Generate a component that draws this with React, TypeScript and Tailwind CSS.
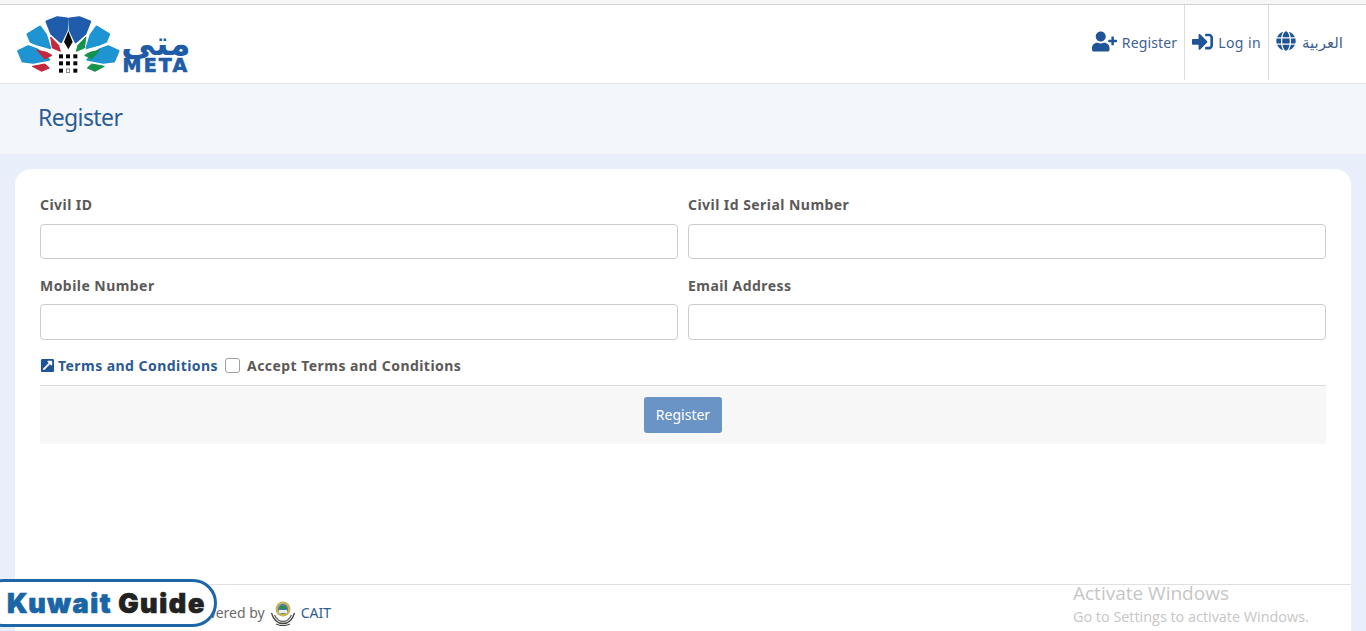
import { FaUserPlus, FaSignInAlt, FaGlobe, FaExternalLinkSquareAlt } from "react-icons/fa";

const noto = "font-['Noto_Sans','DejaVu_Sans',sans-serif]";

const mirror = (pts: number[][]) => pts.map(([x, y]) => `${410 - x},${y}`).join(" ");
const plain = (pts: number[][]) => pts.map(([x, y]) => `${x},${y}`).join(" ");

const dark = [[140, 64], [172, 51], [202, 55], [200, 90], [183, 125], [154, 100]];
const mid = [[83, 102], [120, 79], [138, 104], [150, 143], [112, 132], [92, 124]];
const low = [[55, 152], [85, 138], [112, 148], [147, 178], [100, 187], [68, 183]];
const tints = [
  [[152, 110], [176, 135], [181, 153], [157, 143]],
  [[110, 149], [140, 156], [156, 165], [135, 176]],
  [[97, 198], [135, 191], [148, 203], [125, 213]],
];

function Logo() {
  return (
    <div className="flex items-start pl-[16px]">
      <svg width="105" height="60" viewBox="48 44 315 180" className="mt-[10px] shrink-0">
        {[dark, mid, low].map((p, i) => {
          const c = i === 0 ? "#1f5cab" : "#1f94d2";
          return (
            <g key={i} fill={c} stroke={c} strokeWidth="7" strokeLinejoin="round">
              <polygon points={plain(p)} />
              <polygon points={mirror(p)} />
            </g>
          );
        })}
        {tints.map((p, i) => (
          <g key={i} strokeWidth="3" strokeLinejoin="round">
            <polygon points={plain(p)} fill="#c4283a" stroke="#c4283a" />
            <polygon points={mirror(p)} fill="#17924a" stroke="#17924a" />
          </g>
        ))}
        <polygon points="205,92 218,125 205,147 192,125" fill="#0a0a0a" />
        {[162, 183, 205].map((y) =>
          [177, 198, 220].map((x) =>
            y === 205 && x === 198 ? (
              <rect key={x + y} x={x + 1} y={y + 1} width="10" height="10" fill="#fff" stroke="#555" strokeWidth="2" />
            ) : (
              <rect key={x + y} x={x} y={y} width="12" height="12" fill="#0a0a0a" />
            )
          )
        )}
      </svg>
      <div className="ml-[2px] mt-[23px] flex w-[66px] flex-col items-center text-[#1f5ba6]">
        <span className="font-['DejaVu_Sans',sans-serif] text-[34px] font-bold leading-[30px]">متى</span>
        <span className="font-['DejaVu_Sans',sans-serif] text-[19px] font-bold leading-[15px] tracking-[2.2px] [-webkit-text-stroke:0.7px_#1f5ba6]">
          META
        </span>
      </div>
    </div>
  );
}

function Field({ label, tall }: { label: string; tall?: boolean }) {
  return (
    <div className="flex flex-col">
      <label className="h-[21px] text-[14px] font-bold leading-[21px] tracking-[0.45px] text-[#5c5a58]">{label}</label>
      <input
        type="text"
        className={
          tall
            ? "mt-[8px] h-[36px] w-full rounded-[4px] border border-[#cccccc] bg-white"
            : "mt-[9px] h-[35px] w-full rounded-[4px] border border-[#cccccc] bg-white"
        }
      />
    </div>
  );
}

function Crest() {
  return (
    <svg width="26" height="26" viewBox="0 0 26 26" className="shrink-0">
      <circle cx="13" cy="9" r="7.5" fill="#c9b45a" />
      <circle cx="13" cy="9" r="5" fill="#4f7ba8" />
      <path d="M9 10h8v3H9z" fill="#e8edf0" />
      <path d="M10 6h6v3h-6z" fill="#2f8a50" />
      <path d="M1.5 13c2 7 6 10.500 11.500 10.500s9.500-3.500 11.500-10.500" fill="none" stroke="#444" strokeWidth="1.3" />
      <path d="M4.500 15c2 4.500 5 6.500 8.500 6.500s6.500-2 8.500-6.500" fill="none" stroke="#666" strokeWidth="1.3" />
      <path d="M6 24c4.500 2 9.500 2 14 0" fill="none" stroke="#444" strokeWidth="1.3" />
    </svg>
  );
}

export default function App() {
  return (
    <div className={`relative flex h-[631px] w-full flex-col overflow-hidden bg-[#e9effa] ${noto}`}>
      <div className="h-[5px] border-b border-[#d2d2d2] bg-[#f6f6f6]" />
      <header className="flex h-[79px] items-start justify-between border-b border-[#e6e6e6] bg-white">
        <Logo />
        <nav className="flex h-full items-stretch pb-[3px] text-[14px] tracking-[0.15px] text-[#3f6291]">
          <a className="flex items-center gap-[5px] pr-[7px]">
            <FaUserPlus className="mt-[-3px] text-[25px] text-[#1f5597]" />
            <span>Register</span>
          </a>
          <a className="flex items-center gap-[5px] border-l border-[#dddddd] pl-[7px] pr-[7px] tracking-[0.4px]">
            <FaSignInAlt className="mt-[-3px] text-[21px] text-[#1f5597]" />
            <span>Log in</span>
          </a>
          <a className="flex items-center gap-[6px] border-l border-[#dddddd] pl-[7px] pr-[23px]">
            <FaGlobe className="mt-[-3px] text-[20px] text-[#1f5597]" />
            <span className="text-[15px]">العربية</span>
          </a>
        </nav>
      </header>
      <div className="flex h-[70px] items-center bg-[#f3f6fb] pb-[4px] pl-[38px]">
        <h1 className="text-[23px] font-normal leading-[32px] tracking-[-0.6px] text-[#2a5c96] [font-stretch:semi-condensed]">Register</h1>
      </div>
      <main className="mx-[15px] mt-[15px] flex flex-1 flex-col rounded-t-[16px] bg-white">
        <div className="px-[25px] pt-[25px]">
          <div className="grid grid-cols-2 gap-x-[10px] gap-y-[16px]">
            <Field label="Civil ID" />
            <Field label="Civil Id Serial Number" />
            <Field label="Mobile Number" tall />
            <Field label="Email Address" tall />
          </div>
          <div className="mt-[15px] flex h-[21px] items-center text-[14px] font-bold leading-[21px] tracking-[0.45px]">
            <FaExternalLinkSquareAlt className="text-[15px] text-[#1f5597]" />
            <span className="ml-[3px] text-[#2b5a94]">Terms and Conditions</span>
            <span className="ml-[7px] h-[15px] w-[15px] rounded-[3px] border border-[#a0a0a0] bg-white" />
            <span className="ml-[7px] text-[#5c5a58]">Accept Terms and Conditions</span>
          </div>
          <div className="mt-[9px] flex h-[59px] items-center justify-center border-t border-[#dcdcdc] bg-[#f7f7f7]">
            <button className="h-[36px] w-[78px] rounded-[3px] bg-[#6a93c6] pb-[2px] text-[14px] text-white">Register</button>
          </div>
        </div>
        <footer className="mt-auto flex h-[47px] items-center gap-[5px] border-t border-[#e0e0e0] pl-[173px] pt-[9px] text-[14px] text-[#6b6b6b]">
          <span>Powered by</span>
          <Crest />
          <span className="text-[#2f5c8f]">CAIT</span>
        </footer>
      </main>
      <div className="absolute left-[-20px] top-[579px] flex h-[48px] w-[237px] items-center rounded-l-[26px] rounded-r-[26px] border-[3px] border-[#1f66a8] bg-white pl-[24px] pt-[1px] font-['Inter',sans-serif] text-[27px] font-black leading-none tracking-[1.6px] [-webkit-text-stroke:0.7px_currentColor]">
        <span className="text-[#1a65a6]">Kuwait</span>
        <span className="ml-[6px] text-[#222222]">Guide</span>
      </div>
      <div className="pointer-events-none absolute left-[1073px] top-[582px] font-['Open_Sans',sans-serif] text-[#c6c6c6]">
        <div className="text-[19px] leading-[23px]">Activate Windows</div>
        <div className="text-[14.4px] leading-[23px]">Go to Settings to activate Windows.</div>
      </div>
    </div>
  );
}
